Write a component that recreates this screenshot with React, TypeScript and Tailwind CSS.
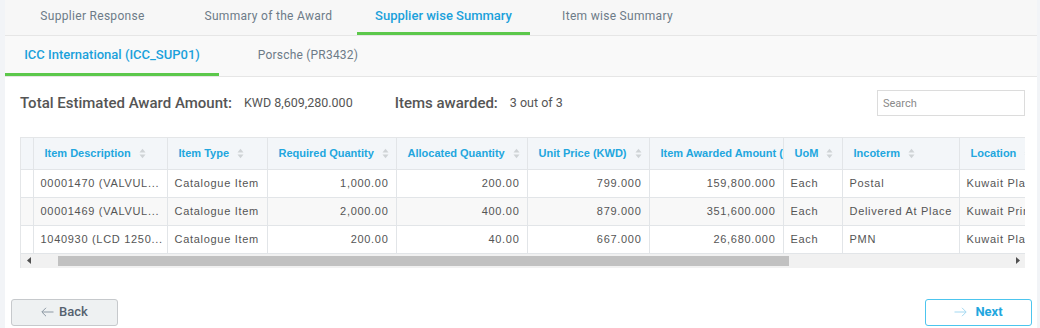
import React from "react";

type Col = { label?: string; w: number; right?: boolean };

const cols: Col[] = [
  { w: 12 },
  { label: "Item Description", w: 134 },
  { label: "Item Type", w: 100 },
  { label: "Required Quantity", w: 129, right: true },
  { label: "Allocated Quantity", w: 131, right: true },
  { label: "Unit Price (KWD)", w: 122, right: true },
  { label: "Item Awarded Amount (KWD)", w: 134, right: true },
  { label: "UoM", w: 59 },
  { label: "Incoterm", w: 117 },
  { label: "Location", w: 150 },
  { label: "Delivery Date", w: 140 },
];

const rows: string[][] = [
  ["", "00001470 (VALVUL...", "Catalogue Item", "1,000.00", "200.00", "799.000", "159,800.000", "Each", "Postal", "Kuwait Place", "12/05/2024"],
  ["", "00001469 (VALVUL...", "Catalogue Item", "2,000.00", "400.00", "879.000", "351,600.000", "Each", "Delivered At Place", "Kuwait Primary", "12/05/2024"],
  ["", "1040930 (LCD 1250...", "Catalogue Item", "200.00", "40.00", "667.000", "26,680.000", "Each", "PMN", "Kuwait Place", "12/05/2024"],
];

function SortIcon() {
  return (
    <svg width="7" height="11" viewBox="0 0 7 11" className="shrink-0 ml-[8px]">
      <path d="M0.5 4.5 L3.5 0.8 L6.5 4.5 Z" fill="#cfd3d6" />
      <path d="M0.5 6.5 L3.5 10.2 L6.5 6.5 Z" fill="#cfd3d6" />
    </svg>
  );
}

export default function App() {
  const totalW = cols.reduce((a, c) => a + c.w, 0);
  return (
    <div className="w-[1040px] h-[328px] bg-[#f2f4f7] flex overflow-hidden font-['Roboto',sans-serif]">
      <div className="ml-[5px] w-[1032px] h-full bg-white flex flex-col">
        {/* Top tabs */}
        <div className="h-[36px] shrink-0 flex bg-[#f7f7f7] border-b border-[#e6e6e6]">
          {[
            { t: "Supplier Response", w: "w-[175px]" },
            { t: "Summary of the Award", w: "w-[177px]" },
            { t: "Supplier wise Summary", w: "w-[173px]", active: true },
            { t: "Item wise Summary", w: "w-[175px]" },
          ].map((tab) => (
            <div
              key={tab.t}
              className={`${tab.w} h-full flex items-center justify-center border-b-[3px] ${
                tab.active
                  ? "border-[#5cc84b] text-[#1ba1db] font-medium text-[13px]"
                  : "border-transparent text-[#6d7b88] text-[12px] tracking-[0.3px]"
              }`}
            >
              {tab.t}
            </div>
          ))}
        </div>
        {/* Supplier tabs */}
        <div className="h-[41px] shrink-0 flex bg-[#f9f9f9] border-b border-[#e6e6e6]">
          <div className="w-[214px] h-full flex items-center justify-center border-b-[3px] border-[#5cc84b] text-[#1ba1db] font-medium text-[13px]">
            ICC International (ICC_SUP01)
          </div>
          <div className="w-[178px] h-full flex items-center justify-center border-b-[3px] border-transparent text-[#6d7b88] text-[12px] tracking-[0.2px]">
            Porsche (PR3432)
          </div>
        </div>

        {/* Content */}
        <div className="pl-[15px] pr-[12px] pt-[13px] flex flex-col">
          <div className="h-[26px] flex items-center justify-between">
            <div className="flex items-center text-[#555]">
              <span className="text-[15px] font-medium">Total Estimated Award Amount:</span>
              <span className="ml-[12px] text-[12.5px]">KWD 8,609,280.000</span>
              <span className="ml-[42px] text-[15px] font-medium">Items awarded:</span>
              <span className="ml-[12px] text-[12.5px]">3 out of 3</span>
            </div>
            <input
              placeholder="Search"
              className="w-[148px] h-[26px] border border-[#dcdcdc] pl-[5px] text-[11px] text-[#555] placeholder:text-[#8a8a8a] outline-none"
            />
          </div>

          {/* Table */}
          <div className="mt-[21px] w-[1005px] overflow-hidden border-t border-l border-[#e4e6e8]">
            <table
              className="table-fixed border-collapse font-['Liberation_Sans',Arial,sans-serif]"
              style={{ width: totalW }}
            >
              <colgroup>
                {cols.map((c, i) => (
                  <col key={i} style={{ width: c.w }} />
                ))}
              </colgroup>
              <thead>
                <tr className="h-[31px] bg-[#f3f6f9]">
                  {cols.map((c, i) => (
                    <th
                      key={i}
                      className="border-r border-b border-[#e2e5e8] px-[11px] text-left font-bold text-[11px] text-[#22a6de] whitespace-nowrap overflow-hidden"
                    >
                      {c.label && (
                        <div className="flex items-center">
                          <span className="whitespace-nowrap shrink-0">{c.label}</span>
                          <SortIcon />
                        </div>
                      )}
                    </th>
                  ))}
                </tr>
              </thead>
              <tbody>
                {rows.map((r, ri) => (
                  <tr key={ri} className={`h-[28px] ${ri === 1 ? "bg-[#f8f8f8]" : "bg-white"}`}>
                    {r.map((v, ci) => (
                      <td
                        key={ci}
                        className={`border-r border-b border-[#e2e5e8] px-[7px] text-[11px] tracking-[0.7px] text-[#555] whitespace-nowrap overflow-hidden ${
                          cols[ci].right ? "text-right" : "text-left"
                        }`}
                      >
                        {v}
                      </td>
                    ))}
                  </tr>
                ))}
              </tbody>
            </table>
            {/* Scrollbar */}
            <div className="h-[14px] flex bg-[#f1f1f1]">
              <div className="w-[15px] h-full flex items-center justify-center">
                <svg width="4" height="7" viewBox="0 0 4 7">
                  <path d="M4 0 L0 3.5 L4 7 Z" fill="#505050" />
                </svg>
              </div>
              <div className="flex-1 h-full flex items-center">
                <div className="ml-[22px] w-[731px] h-[10px] bg-[#c1c1c1]" />
              </div>
              <div className="w-[15px] h-full flex items-center justify-center">
                <svg width="4" height="7" viewBox="0 0 4 7">
                  <path d="M0 0 L4 3.5 L0 7 Z" fill="#505050" />
                </svg>
              </div>
            </div>
          </div>
        </div>

        {/* Buttons */}
        <div className="mt-[31px] pl-[6px] pr-[5px] flex justify-between">
          <button className="w-[107px] h-[27px] rounded-[3px] border border-[#c6c9cc] bg-[#eef1f2] flex items-center justify-center gap-[5px] text-[13px] font-medium text-[#55626f]">
            <svg width="13" height="10" viewBox="0 0 13 10" fill="none">
              <path d="M12.5 5H1 M5 0.8 L0.8 5 L5 9.2" stroke="#8d99a4" strokeWidth="1" />
            </svg>
            Back
          </button>
          <button className="w-[107px] h-[27px] rounded-[3px] border-[1.5px] border-[#4cc5ee] bg-white flex items-center justify-center gap-[8px] text-[13px] font-bold text-[#22a6de]">
            <svg width="13" height="10" viewBox="0 0 13 10" fill="none">
              <path d="M0.5 5H12 M8 0.8 L12.2 5 L8 9.2" stroke="#a3d8f1" strokeWidth="1" />
            </svg>
            Next
          </button>
        </div>
      </div>
    </div>
  );
}
